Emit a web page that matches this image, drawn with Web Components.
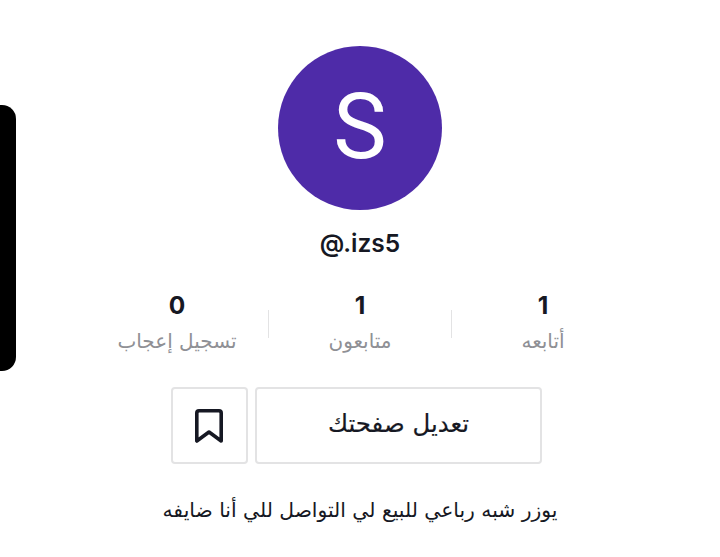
<!DOCTYPE html>
<html lang="ar">
<head>
<meta charset="utf-8">
<title>profile</title>
<style>
html, body { margin: 0; background: #fff; }
body { font-family: "Inter", "DejaVu Sans", sans-serif; overflow: hidden; }
</style>
</head>
<body>
<profile-page>
  <profile-avatar slot="avatar" letter="S"></profile-avatar>
  <span slot="handle">@.izs5</span>
  <profile-stat slot="stats" count="1" label="أتابعه"></profile-stat>
  <profile-stat slot="stats" count="1" label="متابعون" divided></profile-stat>
  <profile-stat slot="stats" count="0" label="تسجيل إعجاب" divided></profile-stat>
  <profile-actions slot="actions">تعديل صفحتك</profile-actions>
  <span slot="bio">يوزر شبه رباعي للبيع لي التواصل للي أنا ضايفه</span>
</profile-page>

<script>
const AR = '"DejaVu Sans", sans-serif';

customElements.define('profile-page', class extends HTMLElement {
  constructor() {
    super();
    this.attachShadow({ mode: 'open' }).innerHTML = `
<style>
:host { display: block; position: relative; width: 720px; height: 557px; overflow: hidden; background: #fff; }
.edge {
  position: absolute; left: 0; top: 105px;
  width: 16px; height: 266px;
  background: #000;
  border-radius: 0 14px 14px 0;
}
main { display: flex; flex-direction: column; align-items: center; padding-top: 46px; }
.handle { margin-top: 17px; font: 600 24.5px/32px "Inter", sans-serif; color: #161823; }
.stats { display: flex; flex-direction: row-reverse; width: 549px; margin-top: 30px; }
.actions { margin-top: 33px; margin-right: 7px; }
.bio { margin-top: 31px; font: 400 20.3px/30px ${AR}; color: #161823; direction: rtl; }
</style>
<div class="edge"></div>
<main>
  <slot name="avatar"></slot>
  <div class="handle"><slot name="handle"></slot></div>
  <div class="stats"><slot name="stats"></slot></div>
  <div class="actions"><slot name="actions"></slot></div>
  <div class="bio"><slot name="bio"></slot></div>
</main>`;
  }
});

customElements.define('profile-avatar', class extends HTMLElement {
  constructor() {
    super();
    this.attachShadow({ mode: 'open' }).innerHTML = `
<style>
:host {
  display: flex; align-items: center; justify-content: center;
  width: 164px; height: 164px; border-radius: 50%;
  background: #4e2ba8; color: #fff;
  font: 400 90px/1 "Roboto", sans-serif;
}
</style>
<span>${this.getAttribute('letter')}</span>`;
  }
});

customElements.define('profile-stat', class extends HTMLElement {
  constructor() {
    super();
    this.attachShadow({ mode: 'open' }).innerHTML = `
<style>
:host { display: block; position: relative; flex: 1 1 0; text-align: center; }
.count { font: 700 24.5px/32px "Inter", sans-serif; color: #161823; }
.label { margin-top: 7px; font: 400 20px/26px ${AR}; color: #8f9095; direction: rtl; }
:host([divided]) .rule {
  position: absolute; right: 0; top: 21px;
  width: 1px; height: 28px; background: #e3e3e4;
}
</style>
<div class="count">${this.getAttribute('count')}</div>
<div class="label">${this.getAttribute('label')}</div>
<div class="rule"></div>`;
  }
});

customElements.define('profile-actions', class extends HTMLElement {
  constructor() {
    super();
    this.attachShadow({ mode: 'open' }).innerHTML = `
<style>
:host { display: flex; gap: 7px; }
.btn {
  box-sizing: border-box; height: 77px;
  display: flex; align-items: center; justify-content: center;
  border: 2px solid #e3e3e4; border-radius: 4px; background: #fff;
  color: #161823;
}
.save { width: 77px; padding: 0 2px 0 0; }
.edit { width: 287px; padding-bottom: 3px; font: 400 24.4px/1 ${AR}; direction: rtl; -webkit-text-stroke: 0.2px #161823; }
svg { display: block; }
</style>
<div class="btn save">
  <svg width="28" height="34" viewBox="0 0 28 34" fill="none" stroke="#161823" stroke-width="3.6" stroke-linejoin="round" stroke-linecap="round">
    <path d="M4 1.8h20q2.2 0 2.2 2.2V32L14 23 1.8 32V4q0-2.2 2.2-2.2z"/>
  </svg>
</div>
<div class="btn edit"><slot></slot></div>`;
  }
});
</script>
</body>
</html>
